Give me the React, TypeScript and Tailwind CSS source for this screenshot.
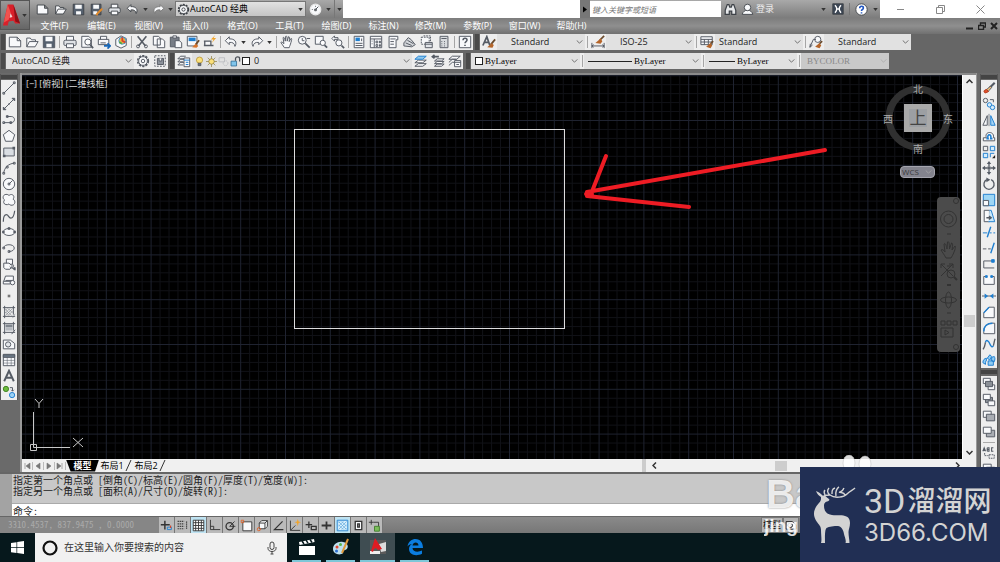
import type { ReactNode } from "react";

const blue = "#1f7fd0";
const fill = "#f8f9fb";

// every glyph is drawn on a 16 x 16 box
const icons: Record<string, ReactNode> = {
  new: <path d="M1.500 2.500h9l4 4v7h-13zM10.500 2.500v4h4" fill={fill} />,
  open: <path d="M2 13.500v-10h4l1.500 2H12v2M2 13.500l3-6h10l-3.500 6z" fill={fill} />,
  save: (
    <>
      <path d="M1.500 1.500h13v13h-13z" fill="#56616f" />
      <path d="M4 2h8v5H4zM5 10h6v4H5z" fill={fill} stroke="none" />
    </>
  ),
  saveAs: (
    <>
      <path d="M1.500 1.500h12v13h-12z" fill="#56616f" />
      <path d="M4 2h7v5H4zM4 10h5v4H4z" fill={fill} stroke="none" />
      <path d="M15 7l-6 6-1 2" stroke="#e08a2c" strokeWidth="2.500" />
    </>
  ),
  print: (
    <>
      <path d="M4 6V1.500h8V6" fill={fill} />
      <rect x="1" y="6" width="14" height="6" rx="1.500" fill="#dfe2e6" />
      <path d="M4 10h8v4.500H4z" fill={fill} />
    </>
  ),
  preview: (
    <>
      <path d="M2 1.500h8l3 3V14H2z" fill={fill} />
      <circle cx="9" cy="8" r="3.500" fill="#fff" />
      <path d="M11.500 11l3.500 4" strokeWidth="2" />
    </>
  ),
  publish: (
    <>
      <path d="M4 5V1.500h7V5M1.500 5h12v6h-12zM4 9h6" fill={fill} />
      <path d="M8 12.500h6M12 9.500l3 3-3 3" stroke="#1767b8" strokeWidth="2" />
    </>
  ),
  dwf: (
    <>
      <path d="M2 5l6-4 6 3v8l-6 3-6-3z" fill={fill} />
      <circle cx="9.500" cy="6.500" r="4" fill="#f3b23f" stroke="#3b9ad8" />
      <path d="M9.500 2.500v4l3.500 2" stroke="#d63f2f" strokeWidth="2" />
      <path d="M6 8l3 2" stroke="#4fa84b" strokeWidth="2" />
    </>
  ),
  cut: (
    <>
      <path d="M3 1.500l9 11M13 1.500l-9 11" strokeWidth="1.800" />
      <circle cx="3.500" cy="13" r="1.700" />
      <circle cx="12.500" cy="13" r="1.700" />
    </>
  ),
  copy: <path d="M1.500 1.500h6l2 2v8h-8zM6 4.500h6l2.500 2.500v7.500H6z" fill={fill} />,
  paste: (
    <>
      <path d="M1.500 2.500h10v11h-10z" fill="#777d86" />
      <path d="M4.500 1h4v2.500h-4z" fill={fill} />
      <path d="M7 6.500h5l2.500 2.500v5.500H7z" fill={fill} />
    </>
  ),
  match: (
    <>
      <path d="M1.500 1.500h11v11h-11z" fill={fill} />
      <path d="M3 3h8v4H3z" fill={blue} stroke="none" />
      <path d="M15 6l-4 5" stroke="#6a4a2c" strokeWidth="2" />
      <path d="M11 10l-4 4 5 .5 2-2z" fill="#d9742b" stroke="none" />
    </>
  ),
  blockEdit: (
    <>
      <path d="M2 7h7v5H2zM1 7h1M1 12h1M9 12h3" fill={fill} strokeWidth="1.500" />
      <path d="M14 0l-5 5h3l-2 4 5-5.500h-3z" fill="#f1a52c" stroke="none" />
    </>
  ),
  undo: <path d="M6 2L1.500 6.500 6 11V8.500c4-.5 6 1 6.500 4.500C15.500 8 12 4 6 4.500z" fill={fill} />,
  redo: <path d="M10 2l4.500 4.500L10 11V8.500c-4-.5-6 1-6.500 4.500C.5 8 4 4 10 4.500z" fill={fill} />,
  pan: <path d="M5 14.500C3.500 12 2 10 1 8.500c1-1 2 0 3.500 1.500L3.500 3c1-.8 1.700 0 2.500 4l.5-5.500c1-.7 1.700 0 1.700 5.500l1.500-5c1-.4 1.500.3.8 5.500l2-3.500c1-.2 1.300.5 0 4.500-.7 3-1.500 4-2 6z" fill={fill} />,
  zoomRt: (
    <>
      <circle cx="6" cy="6" r="4.500" fill={fill} />
      <path d="M9.500 9.500l5 5" strokeWidth="2" />
      <path d="M6 3.500v3h2.500M11 4h4" />
    </>
  ),
  zoomWin: (
    <>
      <path d="M1.500 1.500h9v9h-9z" fill={fill} />
      <circle cx="10" cy="9" r="3" fill="#fff" />
      <path d="M12 11.500l3 3" strokeWidth="2" />
    </>
  ),
  zoomPrev: (
    <>
      <circle cx="9" cy="9" r="3.500" fill={fill} />
      <path d="M12 12l3 3" strokeWidth="2" />
      <path d="M1 4l3-3v2h4v2H4v2z" fill={fill} />
    </>
  ),
  props: (
    <>
      <path d="M2.500 1.500h11v13h-11z" fill={fill} />
      <path d="M4 3h5v4H4z" fill={blue} stroke="none" />
      <path d="M4 9.500h8M4 12h8M11 4v3" />
    </>
  ),
  designCenter: (
    <>
      <path d="M1.500 1.500h13v13h-13z" fill={fill} />
      <path d="M1.500 4.500h13M6 4.500v10M8 7h2v2H8zM12 7h1v2h-1zM8 11h2v2H8zM12 11h1v2h-1zM3 7h1M3 10h1" />
    </>
  ),
  palettes: <path d="M3.500 1.500h10v4h-2v9h-8zM5 4.500h6M5 7.500h4M5 10.500h4" fill={fill} />,
  sheets: <path d="M1 9l5-6 3 2 5 6-4 2.500-9-1zM3 9l7 3M5 6l7 4" fill="#d5d8dc" />,
  markup: (
    <>
      <path d="M1.500 2.500h9v8h-9zM4 1h8v6" strokeDasharray="2 1" fill={fill} />
      <path d="M6 8.500h8v6H6z" fill="#e3e6ea" />
      <path d="M6 10.500h8" />
    </>
  ),
  calc: <path d="M3.500 1.500h9v13h-9zM5 4h6M5 7.500h1M8 7.500h1M5 10h1M8 10h1M5 12.500h1M8 12.500h1" fill="#d9dcdf" />,
  help: (
    <>
      <path d="M1.500 1.500h13v13h-13z" fill={fill} />
      <path d="M5.800 6c0-3 4.500-3 4.500-.3C10.300 7.500 8 7.500 8 9.500M8 11.200v1.500" strokeWidth="1.800" />
    </>
  ),
  gear: (
    <>
      <circle cx="8" cy="8" r="6" strokeWidth="2" strokeDasharray="2.500 1.300" />
      <circle cx="8" cy="8" r="5" fill={fill} />
      <circle cx="8" cy="8" r="2" />
    </>
  ),
  wsave: (
    <>
      <path d="M2 2h12v12H2z" strokeDasharray="2 1.500" />
      <path d="M5 5h7v7H5z" fill="#8c929b" />
      <path d="M7 5v3h3V5" fill={fill} />
    </>
  ),
  layers: (
    <>
      <path d="M1 5.500l3-3h6M1 9l3-3h4M1 12.500l3-3h4M1 12.500h6M1 9h6M1 5.500h7" />
      <path d="M8 4.500h6.500v10H8z" fill={fill} />
      <path d="M8 7h6.500M10 9.500h3M10 12h3" stroke={blue} />
    </>
  ),
  bulb: (
    <>
      <circle cx="8" cy="6" r="4.500" fill="#fbe07a" stroke="#b09030" />
      <path d="M6 10.500h4v3.500H6z" fill="#6f747b" />
    </>
  ),
  sun: (
    <>
      <path d="M8 0v16M0 8h16M2.500 2.500l11 11M13.500 2.500l-11 11" stroke="#8b7a3a" strokeWidth="1" />
      <circle cx="8" cy="8" r="4" fill="#fbe07a" stroke="#8b7a3a" />
    </>
  ),
  vpFreeze: (
    <g stroke="#b4b7bb">
      <path d="M1.500 2.500h8v6h-8z" />
      <circle cx="11" cy="10.500" r="3.500" strokeDasharray="2 1" />
    </g>
  ),
  lock: (
    <>
      <path d="M1.500 7.500h8v7h-8z" fill="#7fc4ea" stroke="#28668f" />
      <path d="M8 7V4c0-3.500 6-3.500 6 0v4" strokeWidth="1.800" />
    </>
  ),
  layerCur: (
    <>
      <path d="M1 10l4-3h9l-4 3zM1 14l4-3h9l-4 3z" fill={fill} />
      <path d="M1 6l4-3.500h9L10 6z" fill="#8fc9ee" stroke={blue} />
    </>
  ),
  layerPrev: (
    <>
      <path d="M4 8l3-2.500h8L12 8zM4 11l3-2.500h8L12 11zM4 14l3-2.500h8L12 14z" fill={fill} />
      <path d="M9 3H2M4 1L1.500 3 4 5" strokeWidth="1.800" />
    </>
  ),
  layerState: (
    <>
      <path d="M1 6l4-3.500h9L10 6zM1 9.500L5 6h5M1 13l4-3.500h3" fill={fill} />
      <path d="M7.500 7.500h7v7h-7zM7.500 9.500h7M9.500 12h3" fill={fill} />
    </>
  ),
  textStyle: (
    <>
      <path d="M1 12L5.500 2 9 12M2.500 8.500h5" strokeWidth="2" />
      <path d="M15 5l-5 6" strokeWidth="2" stroke="#6a4a2c" />
      <path d="M11 9.500l-5 4.500 6 .5 1.500-3z" fill="#b5652a" stroke="none" />
    </>
  ),
  dimStyle: (
    <>
      <path d="M1 9v6M15 9v6M1 12.500h14M3 11l-2 1.500L3 14M13 11l2 1.500-2 1.500" />
      <path d="M15 1l-5 5" strokeWidth="2" stroke="#6a4a2c" />
      <path d="M11 4L5 9l6 1 2-3z" fill="#b5652a" stroke="none" />
    </>
  ),
  tableStyle: (
    <>
      <path d="M1 2h13v9H1zM1 5h13M1 8h13M5 5v6M9.500 5v6" fill={fill} />
      <path d="M15 7l-3 3" strokeWidth="2" stroke="#6a4a2c" />
      <path d="M12 9l-5 4.500 5 1.500 2-3z" fill="#b5652a" stroke="none" />
    </>
  ),
  leaderStyle: (
    <>
      <circle cx="10" cy="5" r="3.500" fill={fill} />
      <path d="M1 14l4-9h3M1 14l.5-4M1 14l3-2.500" />
      <path d="M15 7l-3 3" strokeWidth="2" stroke="#6a4a2c" />
      <path d="M12 9l-5 4.500 5 1.500 2-3z" fill="#b5652a" stroke="none" />
    </>
  ),
  line: <path d="M2 14L14 2M1 13h2v2H1zM13 1h2v2h-2z" />,
  xline: <path d="M2 14L14 2M1.500 14.500v-3l3 3zM14.500 1.500v3l-3-3zM7 8h2" fill="currentColor" />,
  pline: <path d="M5 4h5.500c5 0 5 7 0 7H2M1 10h2v2H1zM5 3h2v2H5zM9 10h2v2H9z" />,
  polygon: <path d="M8 1.500l6.500 5L12 14H4L1.500 6.500z" fill={fill} />,
  rect: (
    <>
      <path d="M2 3.500h12v9H2z" fill="#d9dde2" />
      <path d="M1 11h3v3H1zM12 2h3v3h-3z" fill="currentColor" stroke="none" />
    </>
  ),
  arc: <path d="M2 14C2.500 8 7 3 14 2.500M1 13h2v2H1zM5 6h2v2H5zM13 1.500h2v2h-2z" />,
  circle: (
    <>
      <circle cx="8" cy="8" r="6.500" fill={fill} />
      <path d="M8 8l4-4M7 7h2v2H7z" />
    </>
  ),
  cloud: <path d="M8 3c2-2.500 6-1 5.500 2 0 1-.5 1.500-1 2 2.500 1 3 5 .5 6.500-2 1-4 .5-5-1-2 1.500-5.500 1-6-1.500-.3-1.500.5-2.500 1-3C.5 6.500 1 3 3 2c2-.8 4-.5 5 1z" fill={fill} />,
  spline: <path d="M1.500 14.500c0-4 1-8 3.500-8s2.500 4 5 4S14 6 14.500 2" strokeWidth="1.400" />,
  ellipse: (
    <>
      <ellipse cx="8" cy="8" rx="6.500" ry="4" fill={fill} />
      <path d="M.5 7h2v2h-2zM13.500 7h2v2h-2zM7 3h2v2H7z" />
    </>
  ),
  earc: <path d="M2 8C2 3 14 3 14 8c0 2-2 4-6 4M1 7h2v2H1zM7 11h2v2H7z" />,
  insert: (
    <>
      <path d="M5 2.500h7v7H5z" fill={fill} />
      <path d="M2 7h6l4 3-3 4H4L2 12zM9 9c3-2 5 0 4 2s-3 2-4 0" fill={fill} />
      <path d="M12 13l3 2v-3z" fill="currentColor" />
    </>
  ),
  block: (
    <>
      <path d="M2 9.500l2-6h9v5H4" fill={fill} />
      <path d="M1.500 9.500h8v3h-8z" fill={fill} />
      <circle cx="12" cy="11" r="2.500" fill={fill} />
    </>
  ),
  point: <path d="M6.500 6.500h3v3h-3z" fill="#777" stroke="none" />,
  hatch: (
    <>
      <path d="M3 1v14M13 1v10M1 3h14M1 13h14" />
      <path d="M4 6l2-2M4 9l5-5M4 12l8-8M7 12l5-5M4 8l4 4M4 5l7 7M7 4l5 5M12 15l3-5" strokeWidth=".5" />
    </>
  ),
  gradient: (
    <>
      <path d="M3 1v14M13 1v10M1 3h14M1 13h14M11 15l4-5" />
      <path d="M4 4h8v3H4z" fill="#80868e" stroke="none" />
      <path d="M4 7h8v4H4z" fill="#b6bac0" stroke="none" />
    </>
  ),
  region: (
    <>
      <path d="M1.500 3.500h8l5 4v6h-13z" fill={fill} />
      <circle cx="7" cy="8.500" r="3" fill="#e3e6ea" />
    </>
  ),
  table: (
    <>
      <path d="M1.500 1.500h13v13h-13z" fill={fill} />
      <path d="M1.500 2h13v3h-13z" fill="#6c7986" />
      <path d="M1.500 8.500h13M1.500 11.500h13M6 5v9.500M10.500 5v9.500" strokeWidth=".6" />
    </>
  ),
  mtext: <path d="M2.500 14L8 2l5.500 12M4.500 10h7" strokeWidth="2.200" />,
  addSel: (
    <>
      <circle cx="4.500" cy="4.500" r="3" fill="#6cbb3c" stroke="#3f8020" />
      <circle cx="11.500" cy="11.500" r="3" fill="#9cd2f5" stroke={blue} />
      <path d="M9 3h3v4M10.500 5.500L12 7l1.500-1.500" />
    </>
  ),
  erase: (
    <>
      <path d="M14.500 2l-6 6" strokeWidth="2.500" />
      <path d="M9.500 6L5 10l2 2 4-4.500z" fill="#f2c077" />
      <path d="M5 9.500L2.500 11c-1 2 1.500 3.500 3 2L7.500 12z" fill="#e0502c" stroke="#b03a1e" />
    </>
  ),
  copyObj: (
    <>
      <circle cx="4" cy="4" r="2.500" />
      <path d="M9 3h4v3" />
      <circle cx="8.500" cy="9" r="2.500" stroke={blue} fill="#d5ecfb" />
      <circle cx="12" cy="12" r="2.500" stroke={blue} fill="#d5ecfb" />
    </>
  ),
  mirror: (
    <>
      <path d="M6 3v11H1z" fill={fill} />
      <path d="M10 3v11h5z" stroke={blue} fill="#a8d6f5" />
      <path d="M8 1v14" strokeWidth=".8" />
    </>
  ),
  offset: (
    <>
      <path d="M1.500 13.500V10H5c-3-8 10-8 8 0h1.500v3.500z" fill={fill} />
      <path d="M5 11h2c-2-6 4.500-6 3 0h2" stroke={blue} strokeWidth="1.800" />
    </>
  ),
  array: (
    <>
      <path d="M1.500 1.500h5v5h-5z" />
      <path d="M9.500 1.500h5v5h-5zM1.500 9.500h5v5h-5z" stroke={blue} fill="#d5ecfb" />
      <path d="M9.500 14V9.500H14" stroke={blue} />
      <path d="M15 11.500V15h-3.500z" fill="#222" stroke="none" />
    </>
  ),
  move: (
    <>
      <path d="M8 2v4M8 10v4M2 8h4M10 8h4M7 7h2v2H7z" strokeWidth="1.500" />
      <path d="M8 0l2.500 3.500h-5zM8 16l-2.500-3.500h5zM0 8l3.500-2.500v5zM16 8l-3.500-2.500v5z" fill="currentColor" stroke="none" />
    </>
  ),
  rotate: (
    <>
      <path d="M10.500 3.100a5.800 5.800 0 11-5 0" strokeWidth="1.500" />
      <path d="M5 .5v5.500l4.500-3z" fill="currentColor" stroke="none" />
    </>
  ),
  scale: (
    <>
      <path d="M1.500 1.500h13v13h-13z" fill="#9ed6f5" stroke={blue} />
      <path d="M1.500 8.500h6v6h-6z" fill={fill} />
    </>
  ),
  stretch: (
    <>
      <path d="M2.500 14.500v-13h6v13z" fill={fill} />
      <path d="M8.500 1.500h2l4 13h-7" stroke={blue} fill="#c9e8fb" />
      <path d="M5 10h5M8 8l2.500 2L8 12" strokeWidth="1.600" />
    </>
  ),
  trim: (
    <>
      <path d="M10 2L6 14" stroke={blue} strokeWidth="1.600" />
      <path d="M1 9h5M9 9h2M13 9h2" stroke={blue} />
    </>
  ),
  extend: (
    <>
      <path d="M14 2l-4 12" stroke={blue} strokeWidth="1.600" />
      <path d="M1 9h4M7 9h3" />
    </>
  ),
  breakPt: (
    <>
      <path d="M12 4.500H2v8h12" />
      <path d="M11 3h3v3h-3z" fill={blue} stroke={blue} />
    </>
  ),
  break: (
    <>
      <path d="M5 4H2v9h12V4h-3" fill={fill} />
      <path d="M4 3h2v2H4zM10 3h2v2h-2z" fill={blue} stroke={blue} />
    </>
  ),
  join: (
    <>
      <path d="M0 8h16" />
      <path d="M3 5l4 3-4 3zM13 5L9 8l4 3z" fill={blue} stroke="none" />
    </>
  ),
  chamfer: (
    <>
      <path d="M8 2.500h6v12H2V9z" fill={fill} />
      <path d="M2 9l6-6.500" stroke={blue} strokeWidth="1.600" />
    </>
  ),
  fillet: (
    <>
      <path d="M12 2.500h2.500v12H2V12C2 6 6 2.500 12 2.500z" fill={fill} />
      <path d="M2 12C2 6 6 2.500 12 2.500" stroke={blue} strokeWidth="1.600" />
    </>
  ),
  blend: (
    <>
      <path d="M1 14c2-1 2-4 3-8M13 10c1-3 1-6 2-8" strokeWidth="1.500" />
      <path d="M4 6c1-4 4-1 5 2s3 4 4 2" stroke={blue} strokeWidth="1.600" />
    </>
  ),
  explode: (
    <g stroke={blue} fill="#8fccf3">
      <path d="M1 11c0-3 2-5 4-5v3c-1 0-1 1-1 4zM6 6l3-4 2 2-2 4zM11 5l3-1c1 2 1 3 0 6l-3-1zM7 9h6v5H7z" />
    </g>
  ),
  front: (
    <>
      <path d="M1.500 1.500h8v6h-8zM7 9h7.500v5.500H7z" fill={fill} />
      <path d="M4 5h8v6H4z" fill="#8b9097" />
    </>
  ),
  back: (
    <>
      <path d="M4 5h8v6H4z" fill="#8b9097" />
      <path d="M1.500 1.500h8v6h-8zM7 9h7.500v5.500H7z" fill={fill} />
    </>
  ),
  above: (
    <>
      <path d="M1.500 2.500h9v7h-9z" fill={fill} />
      <path d="M5 6h9.500v7.500H5z" fill="#a9adb3" />
    </>
  ),
  under: (
    <>
      <path d="M5 6h9.500v7.500H5z" fill="#a9adb3" />
      <path d="M1.500 2.500h9v7h-9z" fill={fill} />
    </>
  ),
  label: (
    <>
      <path d="M1 6l1.500-4L4 6M1.500 5h2M6 2v4M6 2h2v4H6M6 4h2M13 2h-2v4h2" strokeWidth="1.300" />
      <path d="M3 8v3h4M8 10h6v4H8z" strokeDasharray="2 1" />
    </>
  ),
  snapInfer: (
    <>
      <path d="M6 2v11M1 7h11" strokeWidth="1.800" />
      <path d="M9 10h5v3H9z" stroke={blue} />
      <path d="M13 8v3" stroke="#d3452c" strokeWidth="1.500" />
    </>
  ),
  snap: <path d="M2 3h8M2 6h8M2 9h8M2 12h8M13 3v10" strokeDasharray="1.500 1" strokeWidth="1.500" />,
  grid: <path d="M1.500 1.500h13v13h-13zM4.500 1.500v13M8 1.500v13M11.500 1.500v13M1.500 4.500h13M1.500 8h13M1.500 11.500h13" fill="#fff" />,
  ortho: <path d="M3 1v12h12M3 9h4v4" />,
  polar: (
    <>
      <circle cx="7" cy="9" r="4.500" strokeWidth="1.600" />
      <path d="M7 9l6-6M7 9h7" />
    </>
  ),
  osnap: (
    <>
      <path d="M3.500 3.500h11v11h-11z" fill={fill} />
      <path d="M1.500 1.500h3v3h-3z" stroke="#e0642c" />
    </>
  ),
  osnap3d: (
    <>
      <path d="M4 5l3-3h7v7l-3 3H4z" fill={fill} />
      <path d="M4 5h7v7M11 5l3-3" />
      <circle cx="3.500" cy="12.500" r="2" stroke="#e0642c" />
    </>
  ),
  otrack: <path d="M13 3L3 13h11" strokeWidth="1.500" />,
  ducs: (
    <>
      <path d="M3 2v12h12M3 14l6-6" />
      <path d="M12 0l1 3 3 1-3 1-1 4-1-4-3-1 3-1z" fill="#f2a62e" stroke="none" />
    </>
  ),
  dyn: <path d="M6 3v8M2 7h8M9 9h6v4H9z" strokeWidth="1.600" />,
  lwt: <path d="M8 3v10M2 8h12" strokeWidth="2.200" />,
  tpy: (
    <>
      <path d="M1.500 1.500h13v13h-13z" fill="#d7effc" stroke={blue} />
      <path d="M3 5l2-2M3 9l6-6M3 13L13 3M7 13l6-6M11 13l2-2M3 7l6 6M3 3l10 10M7 3l6 6" stroke="#5ba5dc" strokeWidth=".8" />
    </>
  ),
  qp: <path d="M4 3h8v10H4zM7 6h2v4H7z" fill={fill} strokeWidth="1.600" />,
  sc: (
    <>
      <path d="M4 1v6M1 4h6M7 4h6v5" />
      <path d="M8 9h6v6H8z" fill="#7bbd5a" stroke="#3f7d2a" />
    </>
  ),
  binoculars: <path d="M1.500 9L4 2h2l1 3h2l1-3h2l2.500 7v5h-5v-4h-3v4h-5z" fill="#e6e8ea" strokeWidth="1.500" />,
  person: (
    <>
      <path d="M1.500 14c1-4 4-4.500 4.500-5h4c.5.5 3.500 1 4.500 5z" fill={fill} />
      <circle cx="8" cy="5.500" r="4" fill={fill} />
    </>
  ),
  exchange: (
    <>
      <path d="M1 1h14v14H1z" fill="#3c4654" />
      <path d="M4 3c3 3 3 7 0 10M12 3c-3 3-3 7 0 10M6 8h4" stroke="#fff" strokeWidth="2" />
    </>
  ),
  question: (
    <>
      <circle cx="8" cy="8" r="7" fill="#fff" />
      <path d="M5.800 6.500c0-3.500 4.500-3 4.500-.5C10.300 8 8 7.800 8 9.800M8 11.500v1.500" stroke="#1f55c0" strokeWidth="2" />
    </>
  ),
  compass: (
    <>
      <circle cx="8" cy="8" r="6.500" fill={fill} stroke="#e8e8e8" strokeWidth="1.500" />
      <path d="M8 8l3.500-3.500M7 7.500h2v2H7zM3.500 8h1M8 3.500v1" />
    </>
  ),
};

const Icon = ({ name, className = "size-3.5" }: { name: string; className?: string }) => (
  <svg
    viewBox="0 0 16 16"
    className={`shrink-0 ${className}`}
    fill="none"
    stroke="currentColor"
    strokeWidth="1.100"
    aria-hidden="true"
  >
    {icons[name]}
  </svg>
);

const Tool = ({ name }: { name: string }) => (
  <button aria-label={name} className="flex h-4 w-[17px] shrink-0 items-center justify-center text-[#555b64]">
    <Icon name={name} />
  </button>
);

const Arrow = () => (
  <button aria-label="more" className="flex h-4 w-[9px] shrink-0 items-center justify-center">
    <svg viewBox="0 0 6 4" className="h-[3px] w-[5px]" aria-hidden="true">
      <path d="M0 0h6L3 4z" fill="#333" />
    </svg>
  </button>
);

const Sep = () => (
  <span className="flex h-4 w-1 shrink-0 items-center justify-center">
    <span className="h-3 w-px bg-[#a5a5a5]" />
  </span>
);

const Grip = () => (
  <span className="h-4 w-1.5 shrink-0 border-x border-[#666] bg-[#4a4a4a]" />
);

const Chevron = ({ className = "text-[#555]" }: { className?: string }) => (
  <svg viewBox="0 0 8 5" className={`mr-0.5 h-[4px] w-[7px] shrink-0 ${className}`} fill="none" stroke="currentColor" aria-hidden="true">
    <path d="M.5.5L4 4 7.500.5" />
  </svg>
);

type ComboProps = {
  label: string;
  value: string;
  className: string;
  textClass?: string;
  disabled?: boolean;
  children?: ReactNode;
};

const Combo = ({ label, value, className, textClass = "", disabled, children }: ComboProps) => (
  <label className={`flex h-4 items-center ${disabled ? "bg-[#c9c9c9] text-[#888]" : "bg-[#e1e1e1] text-[#222]"} ${className}`}>
    {children}
    <select
      aria-label={label}
      disabled={disabled}
      className={`min-w-0 flex-1 appearance-none bg-transparent text-[9px] leading-4 opacity-100 ${textClass}`}
    >
      <option>{value}</option>
    </select>
    <Chevron className={disabled ? "text-[#aaa]" : "text-[#555]"} />
  </label>
);

const Swatch = () => <span className="size-2 shrink-0 border border-[#222] bg-white" />;

const menus = [
  "文件(F)", "编辑(E)", "视图(V)", "插入(I)", "格式(O)", "工具(T)",
  "绘图(D)", "标注(N)", "修改(M)", "参数(P)", "窗口(W)", "帮助(H)",
];

const drawTools = [
  "line", "xline", "pline", "polygon", "rect", "arc", "circle", "cloud", "spline", "ellipse",
  "earc", "insert", "block", "point", "hatch", "gradient", "region", "table", "mtext", "addSel",
];

const modifyTools = [
  "erase", "copyObj", "mirror", "offset", "array", "move", "rotate", "scale", "stretch",
  "trim", "extend", "breakPt", "break", "join", "chamfer", "fillet", "blend", "explode",
];

const statusTools = [
  "snapInfer", "snap", "grid", "ortho", "polar", "osnap", "osnap3d",
  "otrack", "ducs", "dyn", "lwt", "tpy", "qp", "sc",
];

const TitleBar = () => (
  <header className="flex h-[18px] shrink-0 bg-white">
    <div className="flex items-center bg-linear-to-b from-[#a9a9a9] to-[#7c7c7c] pl-[33px] text-[#3d4147]">
      {["new", "open", "save", "saveAs", "print", "undo"].map((name) => (
        <button key={name} aria-label={name} className="flex w-[18px] justify-center">
          <Icon name={name} className="size-[13px]" />
        </button>
      ))}
      <Arrow />
      <button aria-label="redo" className="flex w-4 justify-center text-[#777]">
        <Icon name="redo" className="size-[13px]" />
      </button>
      <Arrow />
      <label className="flex h-4 w-[131px] items-center border border-[#777] bg-linear-to-b from-[#e2e2e2] to-[#c4c4c4]">
        <Icon name="gear" className="ml-px size-[13px]" />
        <select aria-label="工作空间" className="min-w-0 flex-1 appearance-none bg-transparent text-[9px] leading-[14px] text-black">
          <option>AutoCAD 经典</option>
        </select>
        <Arrow />
      </label>
      <span className="flex w-[18px] justify-center">
        <Icon name="compass" className="size-[13px]" />
      </span>
      <Arrow />
      <span className="ml-px flex h-full w-[9px] items-center border-l border-[#777]">
        <Arrow />
      </span>
    </div>
    <div className="flex-1" />
    <div className="flex items-center bg-linear-to-b from-[#a9a9a9] to-[#7c7c7c] text-[#3d4147]">
      <span className="flex h-full w-2.5 items-center justify-center bg-[#777]">
        <svg viewBox="0 0 4 6" className="h-[7px] w-1" aria-hidden="true">
          <path d="M0 0l4 3-4 3z" fill="#000" />
        </svg>
      </span>
      <input
        aria-label="搜索"
        placeholder="键入关键字或短语"
        className="h-4 w-[131px] bg-white pl-0.5 text-[8px] italic placeholder:text-[#777]"
      />
      <span className="flex w-[18px] justify-center"><Icon name="binoculars" className="size-[13px]" /></span>
      <button className="flex w-20 items-center gap-0.5 pl-0.5 text-[9px] text-[#eee]">
        <Icon name="person" className="size-[13px] text-[#3d4147]" />
        登录
      </button>
      <Arrow />
      <button aria-label="exchange" className="flex w-5 justify-center"><Icon name="exchange" className="size-3" /></button>
      <span className="mx-px h-3 w-px bg-[#777]" />
      <button aria-label="帮助" className="flex w-5 justify-center"><Icon name="question" className="size-[13px]" /></button>
      <Arrow />
    </div>
    <div className="flex w-[120px] items-center justify-around text-[#888]">
      <button aria-label="最小化"><svg viewBox="0 0 9 9" className="size-[9px]" stroke="currentColor"><path d="M1 4.500h7" /></svg></button>
      <button aria-label="还原"><svg viewBox="0 0 9 9" className="size-[9px]" stroke="currentColor" fill="none"><path d="M.5 2.500h6v6h-6zM2.500 2.500v-2h6v6h-2" /></svg></button>
      <button aria-label="关闭"><svg viewBox="0 0 9 9" className="size-[9px]" stroke="currentColor"><path d="M.5.5l8 8M8.500.5l-8 8" /></svg></button>
    </div>
  </header>
);

const MenuBar = () => (
  <nav className="flex h-4 shrink-0 items-center bg-linear-to-b from-[#7d7d7d] via-[#8f8f8f] to-[#707070] pl-[31px] text-[9px] text-white">
    {menus.map((m) => (
      <button key={m} className="w-[47px] text-center leading-4">{m}</button>
    ))}
    <div className="ml-auto flex items-center gap-1 pr-0.5 text-[#222]">
      <svg viewBox="0 0 8 8" className="size-2" stroke="currentColor" strokeWidth="2"><path d="M0 6.500h7" /></svg>
      <svg viewBox="0 0 8 8" className="size-2" stroke="currentColor" fill="none"><path d="M.5 3.500h5v4h-5zM2.500 3V1h5v4H6" strokeWidth="1.400" /></svg>
      <svg viewBox="0 0 8 8" className="size-2" stroke="currentColor" strokeWidth="2"><path d="M1 1l6 6M7 1L1 7" /></svg>
    </div>
  </nav>
);

const Toolbars = () => (
  <div className="flex shrink-0 flex-col gap-[3px] bg-[#666] pb-1">
    <div className="flex">
      <div className="flex bg-[#eee]">
        <Grip />
        {["new", "open", "save"].map((n) => <Tool key={n} name={n} />)}
        <Sep />
        {["print", "preview", "publish", "dwf"].map((n) => <Tool key={n} name={n} />)}
        <Sep />
        {["cut", "copy", "paste", "match", "blockEdit"].map((n) => <Tool key={n} name={n} />)}
        <Sep />
        <Tool name="undo" />
        <Arrow />
        <Tool name="redo" />
        <Arrow />
        <Sep />
        {["pan", "zoomRt", "zoomWin", "zoomPrev"].map((n) => <Tool key={n} name={n} />)}
        <Sep />
        {["props", "designCenter", "palettes", "sheets", "markup", "calc"].map((n) => <Tool key={n} name={n} />)}
        <Sep />
        <Tool name="help" />
      </div>
      <div className="ml-px flex bg-[#eee]">
        <Grip />
        <Tool name="textStyle" />
        <Combo label="文字样式" value="Standard" className="w-[88px]" textClass="pl-3.5" />
        <Sep />
        <Tool name="dimStyle" />
        <Combo label="标注样式" value="ISO-25" className="w-[88px]" textClass="pl-3.5" />
        <Sep />
        <Tool name="tableStyle" />
        <Combo label="表格样式" value="Standard" className="w-[88px]" textClass="pl-1" />
        <Sep />
        <Tool name="leaderStyle" />
        <Combo label="多重引线样式" value="Standard" className="w-[87px]" textClass="pl-3.5" />
      </div>
    </div>
    <div className="flex">
      <div className="flex bg-[#eee]">
        <Grip />
        <Combo label="工作空间" value="AutoCAD 经典" className="w-[128px]" textClass="pl-1.5" />
        <Tool name="gear" />
        <Tool name="wsave" />
      </div>
      <div className="ml-px flex bg-[#eee]">
        <Grip />
        <Tool name="layers" />
        <Combo label="图层" value="0" className="w-[220px]" textClass="pl-1">
          <span className="flex items-center pl-0.5 text-[#4b5058]">
            {["bulb", "sun", "vpFreeze", "lock"].map((n) => <Icon key={n} name={n} className="mr-px size-[11px]" />)}
            <Swatch />
          </span>
        </Combo>
        {["layerCur", "layerPrev", "layerState"].map((n) => <Tool key={n} name={n} />)}
      </div>
      <div className="ml-0.5 flex bg-[#eee]">
        <Grip />
        <Combo label="颜色" value="ByLayer" className="w-[109px] pl-1" textClass="pl-0.5 font-['Liberation_Serif'] text-black">
          <Swatch />
        </Combo>
        <Sep />
        <Combo label="线型" value="ByLayer" className="w-[117px] pl-1" textClass="pl-0.5 font-['Liberation_Serif'] text-black">
          <span className="h-px w-11 bg-[#222]" />
        </Combo>
        <Sep />
        <Combo label="线宽" value="ByLayer" className="w-[92px] pl-1" textClass="pl-0.5 font-['Liberation_Serif'] text-black">
          <span className="h-px w-[26px] bg-[#222]" />
        </Combo>
        <Sep />
        <Combo label="打印样式" value="BYCOLOR" className="w-[88px]" textClass="pl-1.5 font-['Liberation_Serif']" disabled />
      </div>
    </div>
  </div>
);

const VerticalBar = ({ children }: { children: ReactNode }) => (
  <div className="flex w-[18px] shrink-0 flex-col items-center border-x border-[#555] bg-[#eee]">
    {children}
  </div>
);

const HGrip = () => <span className="h-1.5 w-full shrink-0 border-y border-[#666] bg-[#444]" />;

// five minor cells make up one major cell
const CELL = 44.8;
const gridLines = Array.from({ length: 45 * 5 }, (_, i) => ({
  major: i % 5 === 0,
  offset: (i - 5) * (CELL / 5),
}));

const Drawing = () => (
  <svg className="absolute inset-0 size-full" fill="none" role="img" aria-label="绘图区">
    {[false, true].map((major) => (
      <g key={String(major)} stroke={major ? "#1f2330" : "#111217"}>
        {gridLines.filter((l) => l.major === major).map(({ offset }) => (
          <g key={offset}>
            <line x1={39.5 + offset} x2={39.5 + offset} y1="0" y2="100%" />
            <line y1={45.5 + offset} y2={45.5 + offset} x1="0" x2="100%" />
          </g>
        ))}
      </g>
    ))}
    <rect x="272.500" y="54.500" width="270" height="199" stroke="#dcdcdc" />
    <path d="M803 75L565 117M584 81l-15 38M565 121l102 11M564 119h6" stroke="#ee1c24" strokeWidth="4" strokeLinecap="round" />
  </svg>
);

const ViewCube = () => (
  <div className="absolute top-[7px] right-2">
    <svg viewBox="0 0 72 76" className="h-[76px] w-[72px] text-[10px]" textAnchor="middle">
      <circle cx="36" cy="36" r="29" fill="none" stroke="#303030" strokeWidth="7" />
      <rect x="22" y="22" width="28" height="28" fill="#a9a9a9" />
      <rect x="27" y="27" width="18" height="18" fill="#9c9fa3" />
      <text x="36" y="42" fontSize="17" fill="#444">上</text>
      <text x="36" y="11" fill="#aaa">北</text>
      <text x="6" y="41" fill="#aaa">西</text>
      <text x="66" y="41" fill="#aaa">东</text>
      <text x="36" y="71" fill="#aaa">南</text>
    </svg>
    <button className="mt-2 ml-[18px] flex h-3 w-[35px] items-center justify-between rounded-sm border border-[#a5a5ae] bg-[#83838d] pl-px text-[8px] leading-[10px] text-[#3a3a3a]">
      WCS
      <Chevron className="text-[#aaa]" />
    </button>
  </div>
);

const NavBar = () => (
  <div className="absolute top-[122px] right-0.5 w-[23px] rounded-sm bg-[#4b4b4b]">
    <svg viewBox="0 0 23 155" className="w-full" fill="none" stroke="#333">
      <circle cx="19" cy="4" r="2.500" />
      <circle cx="11.500" cy="22" r="8" />
      <circle cx="11.500" cy="22" r="4.500" />
      <path d="M10 37h4M10 69h4" />
      <path d="M9 61C7 57 5 55 4 53c1-1 3 0 4 2L7 47c1-1 2 0 3 5l.5-7c1-1 2 0 2 7l2-6c1 0 1.500 1 .5 7l3-4c1 0 0 4-1 6-1 3-2 4-3 6z" />
      <path d="M4 67l12 12M16 67L4 79M4 71v-4h4M16 71v-4h-4" />
      <circle cx="14" cy="77" r="4" />
      <path d="M17 80l3 3M10 88h4" strokeWidth="2" />
      <ellipse cx="11.500" cy="103" rx="8" ry="3" />
      <ellipse cx="11.500" cy="103" rx="3" ry="8" />
      <path d="M10 116h4M4 124h4v4H4zM10 124h4v4h-4zM16 124h4v4h-4zM4 131h12v9H4zM8 133l4 2.500-4 2.500z" />
      <circle cx="19" cy="150" r="2.500" />
    </svg>
  </div>
);

const Ucs = () => (
  <svg viewBox="0 0 60 56" className="absolute bottom-[5px] left-[6px] h-14 w-[60px]" fill="none" stroke="#c9c9c9">
    <path d="M5.500 14v35.500H42M2.500 46.500h6v6h-6zM7 1l4 4.500L15 1M11 5.500V10M45 40l10 9M55 40l-10 9" />
  </svg>
);

const SheetTabs = () => (
  <div className="flex h-[13px] shrink-0 items-center bg-[#f0f0f0] text-[9px] leading-3 text-black">
    {["M3 1v6M8 1L4 4l4 3z", "M7 1L3 4l4 3z", "M3 1l4 3-4 3z", "M7 1v6M2 1l4 3-4 3z"].map((d) => (
      <button key={d} aria-label="翻页" className="flex w-[11px] justify-center border-r border-[#bbb]">
        <svg viewBox="0 0 10 8" className="h-2 w-2.5" fill="#777"><path d={d} stroke="#777" strokeWidth=".6" /></svg>
      </button>
    ))}
    <button className="w-[33px] bg-black font-bold text-white [clip-path:polygon(0_0,100%_0,88%_100%,14%_100%)]">模型</button>
    {["布局1", "布局2"].map((t) => (
      <span key={t} className="flex items-center">
        <button className="w-[26px]">{t}</button>
        <svg viewBox="0 0 8 13" className="h-[13px] w-2" stroke="#333"><path d="M6 1L1 12" /></svg>
      </span>
    ))}
    <div className="ml-auto flex h-full w-[35%] items-center border-l-4 border-[#ccc] px-1.5">
      <svg viewBox="0 0 5 7" className="h-[7px] w-[5px]" fill="none" stroke="#333" strokeWidth="1.500"><path d="M4 .5l-3 3 3 3" /></svg>
      <span className="ml-[37%] h-2.5 w-3 bg-[#cdcdcd]" />
      <svg viewBox="0 0 5 7" className="mr-2.5 ml-auto h-[7px] w-[5px]" fill="none" stroke="#333" strokeWidth="1.500"><path d="M1 .5l3 3-3 3" /></svg>
    </div>
  </div>
);

const Workspace = () => (
  <main className="flex min-h-0 flex-1 overflow-hidden bg-[#6a6a6a]">
    <div className="flex w-[22px] shrink-0 items-start border-r-2 border-[#999] pt-px">
      <VerticalBar>
        <HGrip />
        {drawTools.map((n) => <Tool key={n} name={n} />)}
      </VerticalBar>
    </div>
    <div className="flex min-w-0 flex-1 flex-col border-t-2 border-[#8a8a8a]">
      <div className="flex min-h-0 flex-1">
        <div className="relative flex-1 overflow-hidden bg-black">
          <Drawing />
          <p className="relative px-1 pt-0.5 text-[9px] leading-[14px] text-[#ddd]">[−] [俯视] [二维线框]</p>
          <ViewCube />
          <NavBar />
          <Ucs />
        </div>
        <div className="flex w-3.5 shrink-0 flex-col items-center justify-between border-l border-white bg-[#f0f0f0] py-1">
          <svg viewBox="0 0 7 5" className="h-[5px] w-[7px]" fill="none" stroke="#333" strokeWidth="1.500"><path d="M.5 4l3-3 3 3" /></svg>
          <span className="mt-[231px] mb-auto h-3 w-[11px] bg-[#cdcdcd]" />
          <svg viewBox="0 0 7 5" className="h-[5px] w-[7px]" fill="none" stroke="#333" strokeWidth="1.500"><path d="M.5 1l3 3 3-3" /></svg>
        </div>
      </div>
      <SheetTabs />
    </div>
    <div className="flex w-6 shrink-0 justify-center border-l border-[#999] pt-px">
      <VerticalBar>
        <HGrip />
        {modifyTools.map((n) => <Tool key={n} name={n} />)}
        <span className="h-2 w-full shrink-0 border-y-2 border-[#666] bg-[#444]" />
        {["front", "back", "above", "under"].map((n) => <Tool key={n} name={n} />)}
        <span className="my-0.5 h-px w-3 shrink-0 bg-[#aaa]" />
        <Tool name="label" />
        <Tool name="above" />
      </VerticalBar>
    </div>
  </main>
);

const CommandLine = () => (
  <section className="flex shrink-0 border-t-2 border-[#666] bg-[#a3a3a3] pl-3 font-['Noto_Sans_Mono_CJK_SC','Noto_Sans_CJK_SC',monospace] text-[10px] leading-[11px] text-[#222]">
    <div className="min-w-0 flex-1">
      <div className="h-[30px] border-b border-[#aaa] bg-[#c8c8c8] px-px whitespace-pre">
        <p>指定第一个角点或 [倒角(C)/标高(E)/圆角(F)/厚度(T)/宽度(W)]:</p>
        <p>指定另一个角点或 [面积(A)/尺寸(D)/旋转(R)]:</p>
      </div>
      <label className="flex h-3 items-center bg-white px-px">
        命令:
        <input className="h-3 min-w-0 flex-1" />
      </label>
    </div>
  </section>
);

const StatusBar = () => (
  <div className="flex h-[17px] shrink-0 border-t border-[#666] bg-linear-to-b from-[#8a8a8a] to-[#777] text-[#333]">
    <span className="w-[159px] bg-[#868686] pl-2 font-['Noto_Sans_Mono_CJK_SC','Liberation_Mono',monospace] text-[9px] leading-4 whitespace-pre text-[#aaa]">
      3310.4537, 837.9475 , 0.0000
    </span>
    {statusTools.map((n) => (
      <button
        key={n}
        aria-label={n}
        className={`flex w-4 items-center justify-center border-r border-[#777] ${n === "grid" || n === "tpy" ? "bg-[#bfe3f2]" : "bg-[#bababa]"}`}
      >
        <Icon name={n} className="size-[13px]" />
      </button>
    ))}
    <div className="mr-[201px] ml-auto flex text-[9px] leading-4 text-black">
      <button className="w-[22px] border border-[#777] bg-[#b4b4b4] leading-[14px]">模型</button>
      <button aria-label="布局" className="flex w-4 items-center justify-center border border-[#777] bg-[#b4b4b4]">
        <Icon name="region" className="size-3" />
      </button>
    </div>
  </div>
);

const TaskButton = ({ label, active, children }: { label: string; active?: boolean; children: ReactNode }) => (
  <button
    aria-label={label}
    className={`flex items-center justify-center border-b-2 border-[#7ec7d8] ${active ? "w-[35px] bg-[#3f4d52]" : "w-[29px]"}`}
  >
    <svg viewBox="0 0 18 18" className="size-[18px]" aria-hidden="true">{children}</svg>
  </button>
);

const TaskBar = () => (
  <footer className="flex h-[29px] shrink-0 bg-[#06181c]">
    <button aria-label="开始" className="flex w-[35px] items-center justify-center">
      <svg viewBox="0 0 13 13" className="size-[13px]" fill="#fff">
        <path d="M0 2l5.500-.8v5H0zM6.200 1L13 0v6.200H6.200zM0 7h5.500v5L0 11.200zM6.200 7H13v6l-6.800-1z" />
      </svg>
    </button>
    <label className="flex w-[252px] items-center bg-[#f1f1f1] pr-2.5 pl-1.5">
      <svg viewBox="0 0 18 18" className="size-[18px]" fill="none" stroke="#111" strokeWidth="2.200">
        <circle cx="9" cy="9" r="6.500" />
      </svg>
      <input
        aria-label="搜索"
        placeholder="在这里输入你要搜索的内容"
        className="min-w-0 flex-1 pl-[5px] text-[10px] placeholder:text-[#333]"
      />
      <svg viewBox="0 0 10 14" className="h-3.5 w-2.5" fill="none" stroke="#444">
        <rect x="3" y="1" width="4" height="7.500" rx="2" />
        <path d="M1 6v1.500c0 4 8 4 8 0V6M5 10.500V13M3.500 13h3" />
      </svg>
    </label>
    <div className="flex gap-[5px] pl-[5px]">
      <TaskButton label="视频">
        <path d="M1 8h16v9H1z" fill="#fff" />
        <path d="M1 4l15-3 .6 3-15 3z" fill="#fff" />
        <path d="M4 3l2 3M8 2.200l2 3M12 1.500l2 3" stroke="#06181c" strokeWidth="1.500" />
      </TaskButton>
      <TaskButton label="画图">
        <path d="M1 11c0-5 5-8 10-7 6 1 6 7 2 8-2 .5-2 1-2 3-3 3-10 1-10-4z" fill="#bfe0ef" />
        <circle cx="5" cy="9" r="1.500" fill="#e0452f" />
        <circle cx="8.500" cy="6.500" r="1.500" fill="#58b548" />
        <circle cx="4.500" cy="13" r="1.500" fill="#2f6fd0" />
        <path d="M16 1l-6 14" stroke="#e09a3c" strokeWidth="2" />
      </TaskButton>
      <TaskButton label="AutoCAD" active>
        <path d="M1 2h16v14H1z" fill="#5a5a5a" />
        <path d="M10 6l7-2v9l-5 1z" fill="#ddd" />
        <path d="M1 13h10v3H1z" fill="#eee" />
        <path d="M6 0l7 11-4 1-2-2-2 1-1 3-2-1z" fill="#e01c22" />
      </TaskButton>
      <TaskButton label="Edge">
        <path d="M1.500 8.500C2.500 3 6 1 9.500 1c5 0 7.500 4 7.500 9H6.500c.3 4 5.500 4.500 9.500 2.500v3.300C9.500 19 3 16.500 3 11c0-2.500 1.200-4 3-5-2 .3-3.500 1-4.500 2.500zM6.500 7.500h6C12.500 3.500 7 3.500 6.500 7.500z" fill="#0b7de0" />
      </TaskButton>
    </div>
  </footer>
);

const Watermarks = () => (
  <>
    <svg viewBox="0 0 34 12" className="absolute right-[126px] bottom-[95px] h-3 w-[34px]" fill="#fff" fillOpacity=".85" stroke="#bbb" strokeWidth=".5" aria-hidden="true">
      <ellipse cx="9" cy="8" rx="6" ry="8" />
      <ellipse cx="25" cy="9" rx="6" ry="8" />
    </svg>
    <div className="absolute right-[200px] bottom-5 flex h-[66px] w-9 flex-col gap-1 overflow-hidden text-white/85">
      <p className="pl-0.5 font-['Liberation_Sans'] text-[40px] leading-[36px] font-bold [text-shadow:0_0_2px_#777]">Ba</p>
      <p className="font-['Liberation_Sans'] text-[19px] leading-5 font-bold">jing</p>
    </div>
    <div className="absolute right-0 bottom-0 flex h-[95px] w-[200px] items-center bg-[#212f54] pl-3 text-[#d3d3d3]">
      <svg viewBox="0 0 46 62" className="h-[62px] w-[46px] shrink-0" aria-hidden="true">
        <path
          d="M9 13c-2-1-4-3-5-6 3 1 5 3 6.500 4.500C13 11 14 13 17 15c1 1 0 2-2 2.500-2 .5-3 2-3 4 0 5 2 8 6 9 5 1.500 11 0 15 1.500 4 1 5 4 5 7 0 4-1.500 6-1.500 9 0 4 1 8 1 11h-4c1-3-1-6-1.500-9-.5-4-3-8-6-8-4 0-9 .5-11.500 2-2 2-1.500 11-1.500 15H9c1-3 0-8 0-13 0-4-2-5-4-8-3-4-4-9-2-13 2-5 6-7 6-10z"
          fill="currentColor"
        />
        <path
          d="M12 12c2-1 4-1 6-1 5 4 14 2 17-1 3-3 6-4 8-6M18 11c-3-2-3-5-1-7M20 10c0-3 0-5 3-6M24 12c-1-4 1-8 3-9M28 8c2 0 3-2 4-4M33 11c-1-3-4-2-6-3M13 11c-1-2-1-4 0-5"
          fill="none"
          stroke="currentColor"
          strokeWidth="1.400"
        />
      </svg>
      <div className="pl-[6px] font-['Inter','Noto_Sans_CJK_SC',sans-serif]">
        <p className="flex items-center gap-0.5 text-[28px] leading-[36px] font-medium whitespace-nowrap">
          <span className="font-['Roboto'] text-[34px] font-normal">3D</span>
          溜溜网
        </p>
        <p className="text-[24px] leading-7">3D66.COM</p>
      </div>
    </div>
  </>
);

const AppButton = () => (
  <button aria-label="AutoCAD" className="absolute top-0 left-0 flex h-[30px] w-[30px] items-center border border-[#555] bg-linear-to-b from-[#999] to-[#666] pl-0.5">
    <svg viewBox="0 0 18 24" className="h-6 w-[18px]">
      <path d="M5 1h6l7 20h-5l-2-3-5 1-1 4H0z" fill="#d9202a" />
      <path d="M5 1L1 20l5-3 2-8z" fill="#f0524e" />
      <path d="M11 1l7 20-5-2z" fill="#8e1017" />
      <path d="M8 10l2 4-3 1z" fill="#f2d4d2" />
    </svg>
    <Arrow />
  </button>
);

export default function App() {
  return (
    <div className="relative flex h-screen flex-col overflow-hidden bg-[#666] font-['Open_Sans','Noto_Sans_CJK_SC',sans-serif]">
      <TitleBar />
      <MenuBar />
      <Toolbars />
      <Workspace />
      <CommandLine />
      <StatusBar />
      <TaskBar />
      <AppButton />
      <Watermarks />
    </div>
  );
}
